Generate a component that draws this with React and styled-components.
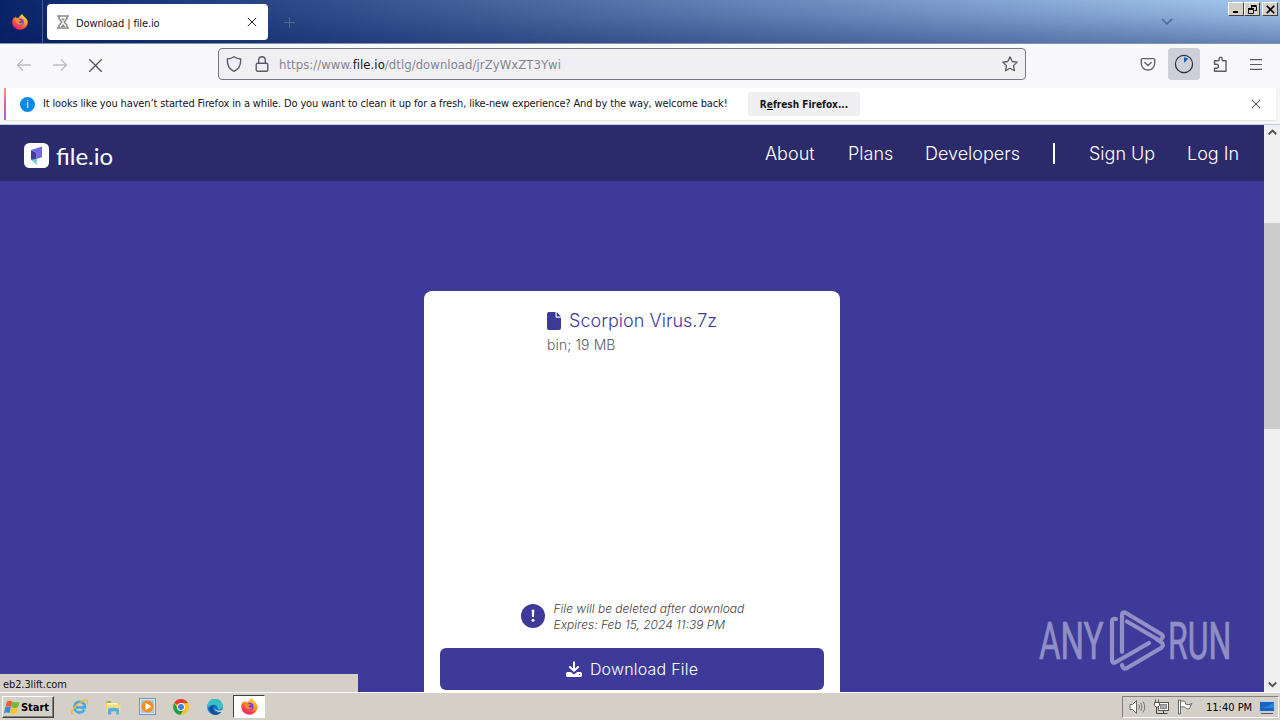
import styled, { createGlobalStyle, css } from "styled-components";

const GlobalStyle = createGlobalStyle`
  * {
    box-sizing: border-box;
  }
  body {
    margin: 0;
    overflow: hidden;
  }
  svg {
    display: block;
    flex: none;
  }
`;

const tahoma = '"DejaVu Sans Condensed", "DejaVu Sans", sans-serif';
const purple = "#3d3a99";

const FirefoxIcon = ({ size = 16 }) => (
  <svg width={size} height={size} viewBox="0 0 16 16">
    <defs>
      <linearGradient id="flame" x1="0.85" y1="0.05" x2="0.25" y2="1">
        <stop offset="0" stopColor="#ffe03a" />
        <stop offset="0.4" stopColor="#ff9a24" />
        <stop offset="0.75" stopColor="#ff4048" />
        <stop offset="1" stopColor="#e8207a" />
      </linearGradient>
    </defs>
    <path
      d="M10 0c.6 1.2 1.6 1.8 2.6 2.9.6.6 1.300 1 1.500 1.700C15.400 6 15.800 7.200 15.700 8.500 15.400 12.700 12.200 15.700 8 15.700S.3 12.400.3 8.200C.3 6.300 1 4.700 1.800 3.500L2 4.600 3.300 2.300l.4 1.500c.9-.3 1.900-.2 2.700.2C7.300 2.700 8.600 1.300 10 0z"
      fill="url(#flame)"
    />
    <circle cx="8.300" cy="8" r="3.500" fill="#7a3fe0" />
    <path
      d="M3.500 5.200c1.300-.8 2.900-.5 3.900.5l1.900.2c-.2.900-1.500 1.100-2 1.500-.5.500-.1 1.500.8 1.800 1 .4 1.900-.3 2.700-.2-.7 1.600-2.600 2.300-4.300 1.600C4.600 9.900 3.400 7.500 3.500 5.200z"
      fill="#ff8a2a"
    />
  </svg>
);

const Hourglass = () => (
  <svg width="12" height="14" viewBox="0 0 12 14" fill="none" stroke="#8a8a8e" strokeWidth="1.500">
    <path d="M0 1h12M0 13h12M2 1v2.500L4.700 7 2 10.500V13M10 1v2.500L7.300 7l2.700 3.500V13" />
    <path d="M4 3.500h4L6 6zM3.500 12L6 9l2.500 3z" fill="#8a8a8e" stroke="none" />
  </svg>
);

const Cross = ({ size, color = "#333", width = 1.2 }) => (
  <svg width={size} height={size} viewBox="0 0 12 12" fill="none" stroke={color} strokeWidth={width}>
    <path d="M1 1l10 10M11 1L1 11" />
  </svg>
);

const Arrow = ({ flip }) => (
  <svg width="16" height="16" viewBox="0 0 16 16" fill="none" stroke="#bdbdc2" strokeWidth="1.300">
    <path d={flip ? "M1 8h13.500M9 2.500L14.500 8 9 13.500" : "M15 8H1.500M7 2.500L1.500 8 7 13.500"} />
  </svg>
);

const Shield = () => (
  <svg width="16" height="16" viewBox="0 0 16 16" fill="none" stroke="#5b5b66" strokeWidth="1.400">
    <path d="M8 .8C6.500 2 4 2.800 1.400 3c-.4 5.500 1.800 10.200 6.600 12.300C12.800 13.200 15 8.500 14.600 3 12 2.800 9.500 2 8 .8z" />
  </svg>
);

const Lock = () => (
  <svg width="14" height="16" viewBox="0 0 14 16" fill="none" stroke="#5b5b66" strokeWidth="1.400">
    <rect x="1.200" y="7.200" width="11.600" height="8" rx="1.500" />
    <path d="M3.700 7V4a3.300 3.300 0 0 1 6.600 0v3" />
  </svg>
);

const Star = () => (
  <svg width="16" height="16" viewBox="0 0 16 16" fill="none" stroke="#5b5b66" strokeWidth="1.300" strokeLinejoin="round">
    <path d="M8 .9l2.200 4.600 5 .6-3.700 3.500 1 5.100L8 12.200l-4.500 2.500 1-5.100L.8 6.100l5-.6z" />
  </svg>
);

const Pocket = () => (
  <svg width="16" height="16" viewBox="0 0 16 16" fill="none" stroke="#5b5b66" strokeWidth="1.300" strokeLinecap="round" strokeLinejoin="round">
    <path d="M2.500 2.600h11c.7 0 1.200.5 1.200 1.200v3.700a6.700 6.700 0 0 1-13.400 0V3.800c0-.7.5-1.200 1.200-1.200z" />
    <path d="M4.800 6.500L8 9.500l3.200-3" />
  </svg>
);

const Progress = () => (
  <svg width="20" height="20" viewBox="0 0 20 20" fill="none">
    <circle cx="10" cy="10" r="8.600" stroke="#30303c" strokeWidth="1.200" />
    <path d="M10 9V3.200a7 7 0 0 1 4.200 1.500z" fill="#0a60c8" />
  </svg>
);

const Puzzle = () => (
  <svg width="16" height="17" viewBox="0 0 16 17" fill="none" stroke="#5b5b66" strokeWidth="1.400" strokeLinejoin="round">
    <path d="M2.500 8.200V4.700h3.700a1 1 0 0 0 .9-1V2.800a1.500 1.500 0 0 1 3 0v.9a1 1 0 0 0 .9 1h3v10.500H2.500v-2.900h1.900a2 2 0 0 0 0-4.100z" />
  </svg>
);

const Menu = () => (
  <svg width="12" height="11" viewBox="0 0 12 11" stroke="#5b5b66" strokeWidth="1.200">
    <path d="M0 .6h12M0 5.500h12M0 10.400h12" />
  </svg>
);

const Chevron = ({ up, size = 9, color = "#505050", width = 2.4 }) => (
  <svg width={size} height={size * 0.75} viewBox="0 0 12 9" fill="none" stroke={color} strokeWidth={width}>
    <path d={up ? "M1 7l5-5 5 5" : "M1 2l5 5 5-5"} />
  </svg>
);

const FileIoMark = () => (
  <svg width="25" height="25" viewBox="0 0 25 25">
    <rect width="25" height="25" rx="5.500" fill="#fff" />
    <path d="M7 7l11-3.500v10.800L12.500 16v-6z" fill="#7468ea" />
    <path d="M7 7l5.500 3v8L7 16.500z" fill="#423b9d" />
    <path d="M7.300 17l5.400-1.500V22z" fill="#68cbd8" />
  </svg>
);

const FileIcon = () => (
  <svg width="14" height="18" viewBox="0 0 14 18" fill={purple}>
    <path d="M2 0h6.500v4.500c0 .8.500 1.200 1.200 1.200H14V16a2 2 0 0 1-2 2H2a2 2 0 0 1-2-2V2a2 2 0 0 1 2-2z" />
    <path d="M9.600 0L14 4.500H9.600z" />
  </svg>
);

const Alert = () => (
  <svg width="24" height="24" viewBox="0 0 24 24">
    <circle cx="12" cy="12" r="12" fill={purple} />
    <path d="M10.700 5.800h2.600l-.3 7.200h-2z" fill="#fff" />
    <circle cx="12" cy="16.300" r="1.500" fill="#fff" />
  </svg>
);

const DownloadIcon = () => (
  <svg width="16" height="16" viewBox="0 0 16 16">
    <path d="M8 1.200v8M3.900 6L8 9.700 12.100 6" fill="none" stroke="#fff" strokeWidth="2" strokeLinecap="round" strokeLinejoin="round" />
    <path d="M1.500 11h3.200L8 13.500l3.300-2.500h3.200A1.500 1.500 0 0 1 16 12.500v2a1.500 1.500 0 0 1-1.500 1.500h-13A1.500 1.500 0 0 1 0 14.500v-2A1.500 1.500 0 0 1 1.500 11z" fill="#fff" />
    <circle cx="13.500" cy="13.600" r=".7" fill={purple} />
  </svg>
);

const WindowsFlag = () => (
  <svg width="16" height="15" viewBox="0 0 16 15">
    <path d="M3 1.500C5 .3 6.500.6 8.400 1.500L7.200 7C5.200 6 3.500 5.900 1.600 6.800z" fill="#e8632c" />
    <path d="M8.600 1.700c2 1 4.400 1.200 6.900.1l-1.400 5.400c-2.400 1-4.500 1-6.600.1z" fill="#70b83c" />
    <path d="M1.300 7.200c1.900-.9 3.700-.9 5.600 0l-1.300 5.900c-1.900-.9-3.600-.9-5.600 0z" fill="#3c8bd8" />
    <path d="M7.200 7.500c2.200 1 4.300.9 6.600 0l-1.400 5.900c-2.300 1-4.400 1-6.500 0z" fill="#f5c52e" />
  </svg>
);

const InternetExplorer = () => (
  <svg width="17" height="16" viewBox="0 0 17 16" fill="none">
    <path d="M13.400 10.700A5.400 5.400 0 1 1 14 8.500H5" stroke="#45a9e0" strokeWidth="2.600" />
    <path d="M2.500 14.800C-.2 15.600.3 12 3.500 8.200S14.500-.2 16 1.500c.7.800.4 2-.3 3.300" stroke="#e9bd35" strokeWidth="1.500" />
  </svg>
);

const Explorer = () => (
  <svg width="16" height="16" viewBox="0 0 16 16">
    <path d="M1 2h5l1 1.500h7V12H1z" fill="#e5c45c" />
    <path d="M2 4h11v8H2z" fill="#fff7cd" />
    <path d="M1 5.500h14.500V13H1z" fill="#f3dc83" />
    <path d="M3 15.500V9.500q5-1.500 11 0v6h-2.800v-3h-5v3z" fill="#58aede" />
    <path d="M2 3h4" stroke="#4ba94f" />
  </svg>
);

const MediaPlayer = () => (
  <svg width="17" height="17" viewBox="0 0 17 17">
    <rect x=".5" y=".5" width="16" height="16" fill="#d8eaf8" stroke="#7196bd" />
    <rect x="2" y="2" width="13" height="13" fill="#a9c9e6" />
    <circle cx="8.500" cy="8.500" r="6" fill="#f78d1e" />
    <path d="M6.500 4.800l6 3.700-6 3.700z" fill="#fff" />
  </svg>
);

const Chrome = () => (
  <svg width="16" height="16" viewBox="0 0 16 16">
    <circle cx="8" cy="8" r="7.800" fill="#fcc31e" />
    <path d="M8 8L1.200 4.100A7.800 7.800 0 0 1 14.800 4.100L8 4.300z" fill="#e33b2e" />
    <path d="M8 8L4.800 9.900 1.200 4.100A7.800 7.800 0 0 0 7.600 15.800L11 10z" fill="#229b4b" />
    <circle cx="8" cy="8" r="3.900" fill="#fff" />
    <circle cx="8" cy="8" r="3" fill="#3f7de8" />
  </svg>
);

const Edge = () => (
  <svg width="16" height="16" viewBox="0 0 16 16">
    <circle cx="8" cy="8" r="7.800" fill="#1674c8" />
    <path d="M.4 7A7.700 7.700 0 0 1 15.800 7.500c0 2.500-3 3.500-5.500 2.800C11.500 8.500 10 5.800 7 5.800 4 5.800 1 7.500.4 10z" fill="#36c2c5" />
    <path d="M7 6.200c-2.300 2.400-.8 7.700 3.600 7.700 1.600 0 3-.6 4-1.500A7.800 7.800 0 0 1 8 15.800C4 15.500 1 11 3.500 7.500 4.400 6.500 5.500 6 7 6.200z" fill="#114f9d" />
    <path d="M7.400 8.300c0 2.500 3.200 4.200 6.900 2.600l1.700 1c-2.800 2.200-8.400 1.300-8.600-3.600z" fill="#d4d0c8" />
  </svg>
);

const Speaker = () => (
  <svg width="17" height="16" viewBox="0 0 17 16" fill="none" stroke="#777" strokeWidth="1">
    <path d="M1 5.500h2.500L7.500 1.500v13l-4-4H1z" fill="#fff" stroke="#666" />
    <path d="M9.700 5.500q1.500 2.500 0 5M11.800 4q2.500 4 0 8M14 2.500q3.400 5.500 0 11" />
  </svg>
);

const Network = () => (
  <svg width="17" height="16" viewBox="0 0 17 16" fill="none" stroke="#555">
    <rect x="5.500" y="3.500" width="10" height="8" fill="#f8f8f8" />
    <rect x="7.500" y="5.500" width="6" height="4" fill="#aaa" stroke="#888" />
    <path d="M10.500 12v2.500M6.500 14.500h8M3.500 7v7.500h4" stroke="#444" />
    <path d="M1.500 3.500h5v3l-1.500 1.500H3L1.500 6.500zM2.500 3.500v-3M5.500 3.500v-3" fill="#fff" />
  </svg>
);

const Flag = () => (
  <svg width="17" height="16" viewBox="0 0 17 16" fill="#fff" stroke="#666">
    <path d="M1.500 1h2v14h-2z" />
    <path d="M3.500 2.500c2-1 3.500-.5 5 .5v2c1.500 1 3.500 1 6.500-.5-1.500 2-1.500 3.500-2.500 5-2 .8-3 .3-4-.8-1.500-1.200-3-1.200-5-.4z" />
  </svg>
);

const Desktop = () => (
  <svg width="16" height="14" viewBox="0 0 16 14">
    <rect x=".5" y="1.500" width="15" height="10" fill="#1665be" stroke="#b9d0e4" />
    <path d="M1 8c5 0 9-2 14-6v6z" fill="#2f85d3" />
    <path d="M2 13.500h12" stroke="#555" />
  </svg>
);

const AnyRunMark = () => (
  <svg width="200" height="66" viewBox="0 0 200 66">
    <g fill="#fff" stroke="#fff" strokeWidth="0.6" fontFamily="Roboto" fontSize="52">
      <text transform="translate(0 51) scale(0.635 1)">ANY</text>
      <text transform="translate(129 51) scale(0.615 1)">RUN</text>
    </g>
    <g fill="none" stroke="#fff" strokeWidth="4.200" strokeLinecap="round" strokeLinejoin="round">
      <path d="M77 11q-4-1-4 3v38q0 4 4 2l33-19" />
      <path d="M83 44V7q0-4 4-2l35 21q3 2 1 4.500t-5 .5L88 13.500" />
      <path d="M83 57q1 5 5 3l34-20q4-3 0-6l-4-2.500" />
    </g>
  </svg>
);

const App = () => {
  return (
    <Screen>
      <GlobalStyle />
      <TabBar>
        <FirefoxView>
          <FirefoxIcon />
        </FirefoxView>
        <Tab>
          <Hourglass />
          <TabTitle>Download | file.io</TabTitle>
          <Cross size={10} color="#222" />
        </Tab>
        <NewTab />
        <TabList>
          <Chevron size={12} color="#4a638c" width={1.500} />
        </TabList>
        <WindowButtons>
          <WindowButton>
            <svg width="8" height="8" viewBox="0 0 8 8"><path d="M1 7h5" stroke="#000" strokeWidth="2" /></svg>
          </WindowButton>
          <WindowButton>
            <svg width="9" height="9" viewBox="0 0 9 9" fill="none" stroke="#000"><path d="M3 .5h5.500M3 1.500h5.500v4H6.500M3.500 3V1M0 3.500h6M0 4.500h5.500v4h-5v-4" /></svg>
          </WindowButton>
          <WindowButton $gap>
            <Cross size={9} color="#000" width={2.300} />
          </WindowButton>
        </WindowButtons>
      </TabBar>

      <NavBar>
        <NavButtons>
          <Arrow />
          <Arrow flip />
          <Cross size={15} color="#55555c" width={1.100} />
        </NavButtons>
        <UrlBar>
          <Shield />
          <Lock />
          <Url>
            https://www.<b>file.io</b>/dtlg/download/jrZyWxZT3Ywi
          </Url>
          <Star />
        </UrlBar>
        <Tools>
          <Tool><Pocket /></Tool>
          <Tool $active><Progress /></Tool>
          <Tool><Puzzle /></Tool>
          <Tool><Menu /></Tool>
        </Tools>
      </NavBar>

      <NoticeArea>
        <Notice>
          <InfoDot>i</InfoDot>
          <NoticeText>
            It looks like you haven’t started Firefox in a while. Do you want to clean it up for a fresh, like-new experience? And by the way, welcome back!
          </NoticeText>
          <RefreshButton>
            <span>R<u>e</u>fresh Firefox...</span>
          </RefreshButton>
          <NoticeClose>
            <Cross size={10} color="#666" width={1.300} />
          </NoticeClose>
        </Notice>
      </NoticeArea>

      <Viewport>
        <Page>
          <Header>
            <Brand>
              <FileIoMark />
              <BrandName>file.io</BrandName>
            </Brand>
            <Links>
              <NavLink $width={51}>About</NavLink>
              <NavLink $width={45}>Plans</NavLink>
              <NavLink $width={95}>Developers</NavLink>
              <Divider />
              <NavLink $width={66}>Sign Up</NavLink>
              <NavLink $width={52}>Log In</NavLink>
            </Links>
          </Header>
          <Card>
            <FileInfo>
              <FileName>
                <FileIcon />
                Scorpion Virus.7z
              </FileName>
              <FileMeta>bin; 19 MB</FileMeta>
            </FileInfo>
            <Expiry>
              <Alert />
              <div>
                File will be deleted after download
                <br />
                Expires: Feb 15, 2024 11:39 PM
              </div>
            </Expiry>
            <DownloadButton>
              <DownloadIcon />
              Download File
            </DownloadButton>
          </Card>
        </Page>
        <Scrollbar>
          <Chevron up />
          <Thumb />
          <Chevron />
        </Scrollbar>
        <StatusPanel>eb2.3lift.com</StatusPanel>
      </Viewport>

      <Taskbar>
        <StartButton>
          <WindowsFlag />
          Start
        </StartButton>
        <Shortcuts>
          <Shortcut><InternetExplorer /></Shortcut>
          <Shortcut><Explorer /></Shortcut>
          <Shortcut><MediaPlayer /></Shortcut>
          <Shortcut><Chrome /></Shortcut>
          <Shortcut><Edge /></Shortcut>
          <Shortcut $active><FirefoxIcon size={17} /></Shortcut>
        </Shortcuts>
        <Tray>
          <Speaker />
          <Network />
          <Flag />
          <Clock>11:40 PM</Clock>
          <Desktop />
        </Tray>
      </Taskbar>
      <Watermark>
        <AnyRunMark />
      </Watermark>
    </Screen>
  );
};

const Screen = styled.div`
  position: relative;
  width: 1280px;
  height: 720px;
  display: flex;
  flex-direction: column;
  overflow: hidden;
  font-family: ${tahoma};
  font-size: 11px;
  color: #15141a;
  white-space: nowrap;
`;
const TabBar = styled.div`
  height: 44px;
  flex: none;
  display: flex;
  align-items: flex-start;
  background:
    linear-gradient(180deg, rgba(0, 24, 90, 0) 0%, rgba(0, 24, 90, 0.1) 35%, rgba(0, 24, 90, 0.38) 100%),
    linear-gradient(90deg, #0a246a 0%, #a6caf0 100%);
  border-bottom: 1px solid #8b91a8;
`;
const FirefoxView = styled.div`
  width: 43px;
  height: 43px;
  padding: 14px 0 0 12px;
  border-right: 1px solid #465b94;
`;
const Tab = styled.div`
  width: 221px;
  height: 36px;
  margin: 4px 0 0 4px;
  padding: 0 11px 0 10px;
  display: flex;
  align-items: center;
  background: #fff;
  border-radius: 4px;
`;
const TabTitle = styled.div`
  flex: 1;
  margin-left: 7px;
  padding-top: 2px;
  letter-spacing: -0.13px;
`;
const NewTab = styled.div`
  width: 11px;
  height: 11px;
  margin: 17px 0 0 16px;
  background:
    linear-gradient(#566a80, #566a80) 5px 0 / 1px 11px no-repeat,
    linear-gradient(#566a80, #566a80) 0 5px / 11px 1px no-repeat;
`;
const TabList = styled.div`
  margin: 17px 55px 0 auto;
`;
const WindowButtons = styled.div`
  display: flex;
  width: 52px;
  padding-top: 2px;
`;
const WindowButton = styled.div`
  width: 16px;
  height: 14px;
  display: flex;
  align-items: center;
  justify-content: center;
  background: #d4d0c8;
  border: 1px solid;
  border-color: #fff #404040 #404040 #fff;
  margin-left: ${(props) => (props.$gap ? "2px" : "0")};
`;
const NavBar = styled.div`
  height: 44px;
  flex: none;
  display: flex;
  align-items: center;
  padding-bottom: 4px;
  background: #f9f9fb;
`;
const NavButtons = styled.div`
  width: 218px;
  padding: 2px 0 0 16px;
  display: flex;
  align-items: center;
  gap: 20px;
`;
const UrlBar = styled.div`
  width: 808px;
  height: 32px;
  padding: 0 7px;
  display: flex;
  align-items: center;
  background: #f0f0f4;
  border: 1px solid #77777f;
  border-radius: 4px;

  & > svg + svg {
    margin-left: 13px;
  }
`;
const Url = styled.div`
  flex: 1;
  margin-left: 10px;
  font-size: 13px;
  letter-spacing: 0.04px;
  color: #85858c;

  b {
    font-weight: 400;
    color: #15141a;
  }
`;
const Tools = styled.div`
  margin-left: 106px;
  display: flex;
  gap: 4px;
`;
const Tool = styled.div`
  width: 32px;
  height: 32px;
  display: flex;
  align-items: center;
  justify-content: center;
  border-radius: 4px;
  background: ${(props) => (props.$active ? "#cdd0d9" : "transparent")};
`;
const NoticeArea = styled.div`
  height: 37px;
  flex: none;
  padding: 0 4px 4px;
  background: #f5f7f7;
  border-bottom: 1px solid #c5cbdc;
`;
const Notice = styled.div`
  height: 32px;
  display: flex;
  align-items: center;
  background: #fff;
  border-left: 2px solid;
  border-image: linear-gradient(#ff9a7b, #e45bb0 50%, #9c68dc) 1;
  box-shadow: 0 1px 1px #e4e8e0;
`;
const InfoDot = styled.div`
  width: 15px;
  height: 15px;
  margin-left: 14px;
  flex: none;
  border-radius: 50%;
  background: #0a8ae6;
  color: #fff;
  font-size: 10px;
  line-height: 15px;
  text-align: center;
`;
const NoticeText = styled.div`
  width: 713px;
  padding: 0 0 2px 8px;
  letter-spacing: -0.145px;
`;
const RefreshButton = styled.div`
  width: 112px;
  height: 24px;
  display: flex;
  align-items: center;
  justify-content: center;
  border-radius: 4px;
  background: #efeff1;
  font-weight: 700;
  font-size: 10px;
`;
const NoticeClose = styled.div`
  margin: 0 15px 0 auto;
`;
const Viewport = styled.div`
  position: relative;
  height: 567px;
  flex: none;
  display: flex;
`;
const Page = styled.div`
  width: 1264px;
  overflow: hidden;
  background: ${purple};
  font-family: Inter, sans-serif;
  font-weight: 300;
`;
const Header = styled.div`
  height: 56px;
  padding: 0 25px 0 24px;
  display: flex;
  align-items: center;
  justify-content: space-between;
  background: #2b2a6b;
  color: #fff;
`;
const Brand = styled.div`
  display: flex;
  align-items: center;
  gap: 7px;
  padding-top: 4px;
`;
const BrandName = styled.div`
  padding-top: 2px;
  font-family: Lato, sans-serif;
  font-size: 24px;
  font-weight: 400;
  line-height: 26px;
`;
const Links = styled.div`
  display: flex;
  align-items: center;
  gap: 32px;
  font-size: 18px;
`;
const NavLink = styled.div`
  width: ${(props) => props.$width}px;
  padding-top: 1px;
`;
const Divider = styled.div`
  width: 2px;
  height: 21px;
  margin: 0 2px 0 1px;
  background: #fff;
`;
const Card = styled.div`
  width: 416px;
  height: 420px;
  margin: 110px auto 0;
  padding: 16px;
  display: flex;
  flex-direction: column;
  align-items: center;
  background: #fff;
  border-radius: 8px;
`;
const FileInfo = styled.div`
  width: 170px;
  height: 294px;
`;
const FileName = styled.div`
  display: flex;
  align-items: center;
  gap: 8px;
  font-size: 18px;
  line-height: 27px;
  letter-spacing: 0.04px;
  color: ${purple};
`;
const FileMeta = styled.div`
  font-size: 14px;
  line-height: 22px;
  letter-spacing: 0.1px;
  color: #5c5c65;
`;
const Expiry = styled.div`
  width: 223px;
  display: flex;
  align-items: center;
  gap: 9px;
  font-size: 12px;
  line-height: 16px;
  font-style: italic;
  color: #444;

  svg {
    margin-top: -2px;
  }
`;
const DownloadButton = styled.div`
  width: 384px;
  height: 42px;
  margin-top: 15px;
  flex: none;
  display: flex;
  align-items: center;
  justify-content: center;
  gap: 8px;
  background: ${purple};
  color: #fff;
  font-size: 16px;
  letter-spacing: 0.2px;
  border-radius: 6px;
`;
const Scrollbar = styled.div`
  width: 16px;
  padding: 4px 0;
  display: flex;
  flex-direction: column;
  align-items: center;
  background: #f0f0f0;
`;
const Thumb = styled.div`
  width: 16px;
  height: 206px;
  margin: 87px 0 auto;
  background: #cdcdcd;
`;
const StatusPanel = styled.div`
  position: absolute;
  left: 0;
  bottom: 0;
  width: 358px;
  height: 18px;
  padding: 4px 3px 0;
  background: #d4d0c8;
  line-height: 14px;
  letter-spacing: -0.1px;
`;
const Taskbar = styled.div`
  height: 28px;
  flex: none;
  padding: 2px 0 0 2px;
  display: flex;
  background: #d4d0c8;
  border-top: 1px solid #fff;
`;
const StartButton = styled.div`
  width: 52px;
  height: 22px;
  margin-top: 1px;
  padding-left: 1px;
  display: flex;
  align-items: center;
  gap: 1px;
  border: 1px solid;
  border-color: #fff #404040 #404040 #fff;
  box-shadow: inset -1px -1px #808080;
  color: #000;
  font-weight: 700;
  letter-spacing: -0.05px;
`;
const Shortcuts = styled.div`
  display: flex;
  margin-left: 9px;
  gap: 2px;
`;
const Shortcut = styled.div`
  width: 32px;
  height: 23px;
  display: flex;
  align-items: center;
  justify-content: center;
  ${(props) =>
    props.$active &&
    css`
      background: #fff;
      border: 1px solid;
      border-color: #404040 #fff #fff #404040;
    `}
`;
const Tray = styled.div`
  width: 157px;
  height: 22px;
  margin: 1px 1px 0 auto;
  padding: 0 2px 0 6px;
  display: flex;
  align-items: center;
  gap: 7px;
  border: 1px solid;
  border-color: #808080 #fff #fff #808080;
`;
const Clock = styled.div`
  width: 46px;
  margin-left: 5px;
  color: #000;
`;
const Watermark = styled.div`
  position: absolute;
  left: 1039px;
  top: 608px;
  opacity: 0.43;
`;

export default App;
